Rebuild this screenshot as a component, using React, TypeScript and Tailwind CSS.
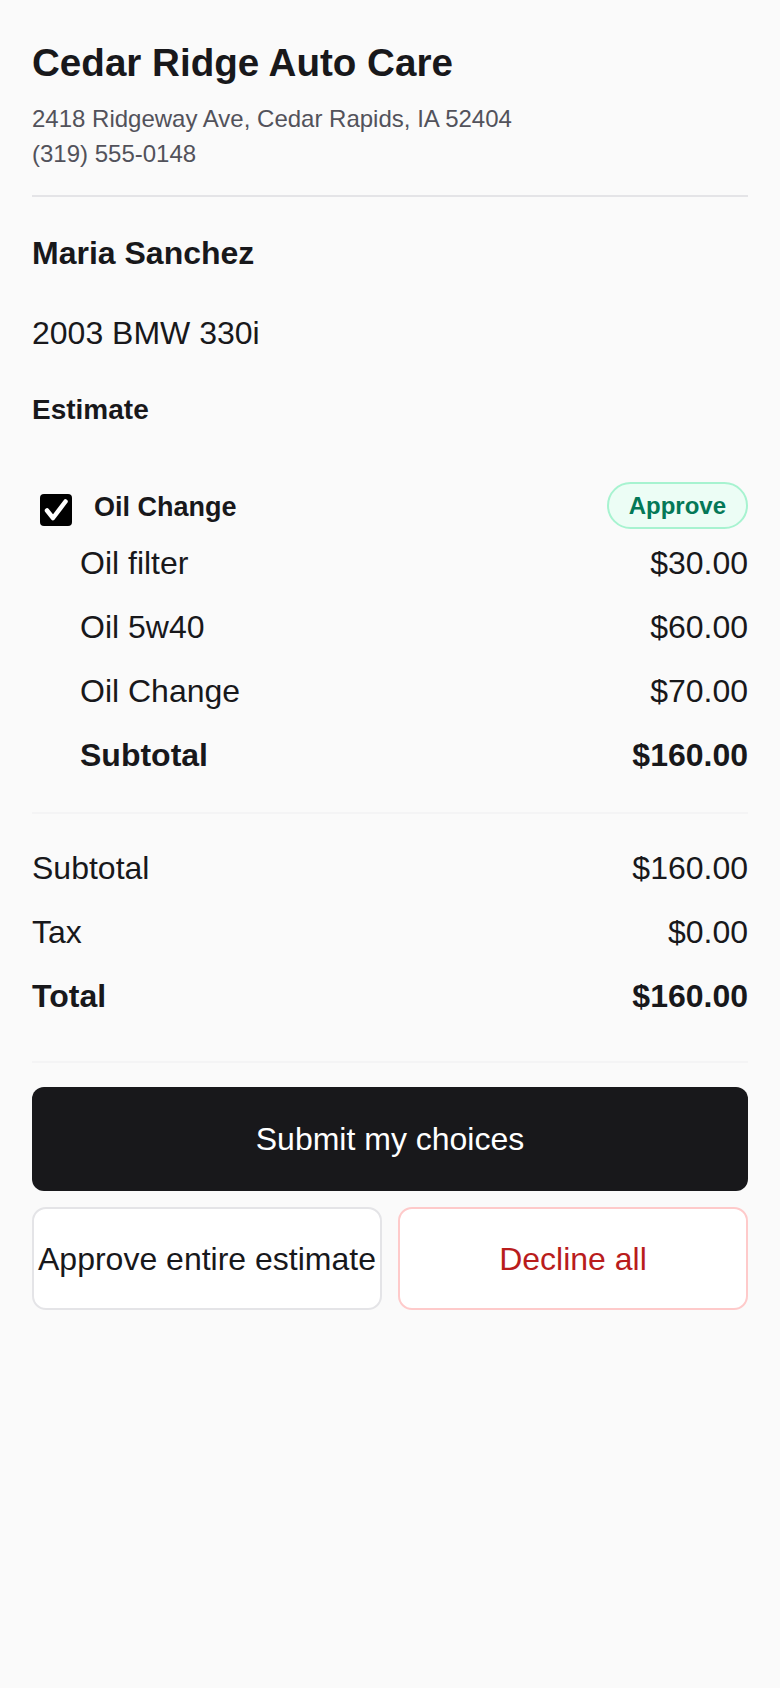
const lines = [
  { name: "Oil filter", price: "$30.00" },
  { name: "Oil 5w40", price: "$60.00" },
  { name: "Oil Change", price: "$70.00" },
];

const App = () => {
  return (
    <div className="min-h-screen bg-[#fafafa] text-[#18181b] font-['Liberation_Sans',Arial,sans-serif]">
      <div className="px-8 pt-10 pb-16">
        <header>
          <h1 className="text-[38.6px] leading-[46px] font-bold">Cedar Ridge Auto Care</h1>
          <div className="mt-[15px] text-[24px] leading-[35px] text-[#52525b]">
            <p>2418 Ridgeway Ave, Cedar Rapids, IA 52404</p>
            <p>(319) 555-0148</p>
          </div>
        </header>

        <div className="mt-6 h-[2px] bg-[#e4e4e7]"></div>

        <h2 className="mt-9 text-[32px] leading-10 font-bold">Maria Sanchez</h2>
        <p className="mt-10 text-[32px] leading-10">2003 BMW 330i</p>
        <h3 className="mt-[39px] text-[28px] leading-9 font-bold">Estimate</h3>

        <section className="mt-[54px]">
          <div className="flex items-center justify-between">
            <label className="flex items-center gap-[22px] pl-2">
              <span className="mt-2 flex h-8 w-8 items-center justify-center rounded-[4px] bg-black">
                <svg viewBox="0 0 32 32" className="h-8 w-8">
                  <path
                    d="M7 16.5 L13 24 L25.5 7.5"
                    fill="none"
                    stroke="white"
                    strokeWidth="4.5"
                    strokeLinecap="round"
                    strokeLinejoin="round"
                  />
                </svg>
              </span>
              <span className="mt-1 text-[27px] font-bold">Oil Change</span>
            </label>
            <button className="h-[47px] rounded-full border-2 border-[#a7f3d0] bg-[#ecfdf5] px-[20px] text-[24px] font-bold text-[#047857]">
              Approve
            </button>
          </div>

          <ul className="mt-[14px] flex flex-col gap-6 pl-12">
            {lines.map((l) => (
              <li key={l.name} className="flex justify-between text-[32px] leading-10">
                <span>{l.name}</span>
                <span>{l.price}</span>
              </li>
            ))}
            <li className="flex justify-between text-[32px] leading-10 font-bold">
              <span>Subtotal</span>
              <span>$160.00</span>
            </li>
          </ul>
        </section>

        <div className="mt-[37px] h-[2px] bg-[#f4f4f5]"></div>

        <div className="mt-[34px] flex flex-col gap-6 text-[32px] leading-10">
          <div className="flex justify-between">
            <span>Subtotal</span>
            <span>$160.00</span>
          </div>
          <div className="flex justify-between">
            <span>Tax</span>
            <span>$0.00</span>
          </div>
          <div className="flex justify-between font-bold">
            <span>Total</span>
            <span>$160.00</span>
          </div>
        </div>

        <div className="mt-[45px] h-[2px] bg-[#f4f4f5]"></div>

        <button className="mt-6 h-[104px] w-full rounded-xl bg-[#18181b] text-[32px] text-white">
          Submit my choices
        </button>
        <div className="mt-4 grid grid-cols-2 gap-4">
          <button className="h-[103px] whitespace-nowrap rounded-[14px] border-2 border-[#e4e4e7] bg-white text-[32px]">
            Approve entire estimate
          </button>
          <button className="h-[103px] rounded-[14px] border-2 border-[#fecaca] bg-white text-[32px] text-[#b91c1c]">
            Decline all
          </button>
        </div>
      </div>
    </div>
  );
};

export default App;
